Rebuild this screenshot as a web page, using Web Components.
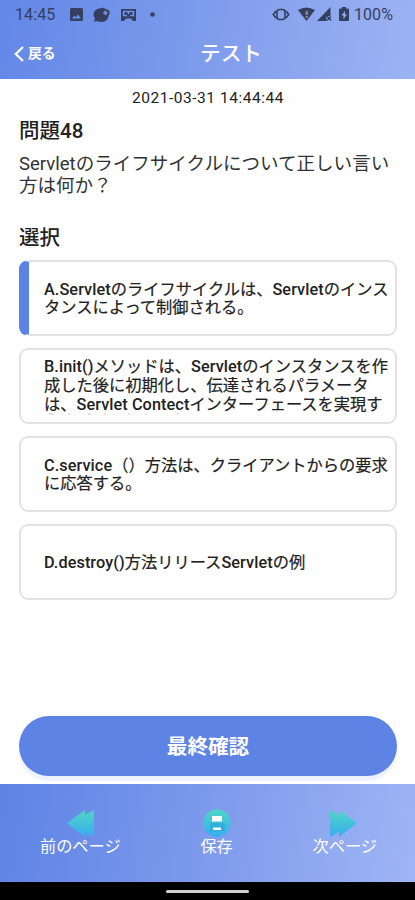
<!DOCTYPE html>
<html lang="ja">
<head>
<meta charset="utf-8">
<meta name="viewport" content="width=device-width">
<title>テスト</title>
<style>
body{margin:0;font-family:Roboto,"Noto Sans CJK JP",sans-serif;color:#222;background:#fefefe}
</style>
</head>
<body>
<quiz-app></quiz-app>
<script>
const define = (name, html) => customElements.define(name, class extends HTMLElement {
  constructor() {
    super();
    const t = document.createElement('template');
    t.innerHTML = html;
    this.attachShadow({mode: 'open'}).append(t.content.cloneNode(true));
  }
});

define('status-bar', `
<style>
:host{display:flex;height:30px;padding:0 22px 0 15px;box-sizing:border-box;align-items:center;color:#343f61;font-size:16px;letter-spacing:.1px}
svg{display:block;fill:currentColor;flex:none}
.sp{flex:1}
span{white-space:nowrap;line-height:30px}
.clock{width:54px}
</style>
<span class="clock">14:45</span>
<svg width="86" height="16" viewBox="0 0 86 16">
  <path fill-rule="evenodd" d="M2.500 1h10q1.500 0 1.500 1.500v10q0 1.500-1.500 1.500h-10Q1 14 1 12.500v-10Q1 1 2.500 1zM3 11.500h9L9 7.500l-2.200 2.700L5.200 8.500z"/>
  <path d="M32 1.300c2-1 3.800-.3 4.700 1 2.500.2 4.300 1.500 4 3.500l-1.500 4c-.3 3-3.200 5.200-6.500 5.200-1.700 0-3-.3-3.800-.8L25 14.500l1-3C22.500 6.500 26 1.500 32 1.300z"/>
  <path d="m33.800 6 2-2.500 3 2-2 3z" fill="#6f8cdd"/>
  <path fill-rule="evenodd" d="M52 2h15v12h-3l-2-2.500h-5L55 14h-3zM53.800 3.800v5.500h11.400V3.800z"/><path d="M55.500 5h3v3h-3zM60.500 5h3v3h-3zM58 7h3v2.500h-3z"/>
  <circle cx="83.500" cy="7.500" r="2.300"/>
</svg>
<span class="sp"></span>
<svg width="80" height="18" viewBox="0 0 80 18">
  <rect x="5" y="3.500" width="8" height="10" rx="2.500" fill="none" stroke="currentColor" stroke-width="1.600"/>
  <path fill="none" stroke="currentColor" stroke-width="1.700" d="M4 5 1.300 8.500 4 12M14 5l2.700 3.500L14 12"/>
  <path d="M26 4q8.500-5 17 0l-8.500 11z"/>
  <path d="M33.500 5h2.500v4h-2.500zm0 5h2.500v2h-2.500z" fill="#85867f"/>
  <path d="M58.500 1v9h-4v5H45z"/><path d="m55 10 4 4.500m0-4-4 4" stroke="currentColor" stroke-width="1.300"/>
  <path fill-rule="evenodd" d="M70 1h4v1.500h2q1 0 1 1V14q0 1-1 1h-8q-1 0-1-1V3.500q0-1 1-1h2zM73 5l-3.500 4.500h2V13L75 8.500h-2z"/>
</svg>
<span style="margin-left:2px">100%</span>`);

define('title-bar', `
<style>
:host{display:grid;grid-template-columns:90px 1fr 43px;height:49px;align-items:center;color:#fff;padding:0 0 2px;box-sizing:border-box}
.back{display:flex;align-items:center;gap:4px;padding:0 0 2px 14px;font-size:13.800px;font-weight:700;line-height:20px}
svg{display:block;margin-top:2px}
h1{margin:0;font-size:20.700px;font-weight:500;line-height:28px;text-align:center}
</style>
<div class="back"><svg width="10" height="18" viewBox="0 0 10 18"><path d="M9 2 1.800 9 9 16" fill="none" stroke="#fff" stroke-width="2.200"/></svg><span><slot name="back"></slot></span></div>
<h1><slot></slot></h1>`);

define('quiz-option', `
<style>
:host{display:flex;height:76px;box-sizing:border-box;border:2px solid #e2e2e2;border-radius:9px;overflow:hidden;align-items:center;font-size:16.250px;line-height:18.700px;position:relative;background:#fff}
:host([selected]){border-left:10px solid #5b83e6}
:host([selected]) .text{padding-left:15px}
.text{padding:2px 0 0 23px;white-space:nowrap;-webkit-text-stroke:.2px currentColor}
:host([overflowing]){align-items:flex-start}
/* Only the first three lines of a long answer fit the card. */
:host([overflowing]) .text{padding-top:8px}
.clip{display:none;position:absolute;left:28px;bottom:7px}
:host([overflowing]) .clip{display:block}
</style>
<div class="text"><slot></slot></div>
<svg class="clip" width="150" height="2"><path d="M0 1h5M19 1h2M39 1h3M55 1h2M79 1h2M96 1h2M128 1h2" stroke="#c4c4c4"/></svg>`);

define('confirm-button', `
<style>
:host{display:block}
button{display:block;width:100%;height:60px;border:0;border-radius:30px;background:#5d83e4;color:#fff;font:700 20.600px/62px Roboto,"Noto Sans CJK JP",sans-serif;padding:0;box-shadow:0 5px 2px #ecf1fc}
</style>
<button><slot></slot></button>`);

define('nav-item', `
<style>
:host{display:flex;flex-direction:column;align-items:center;color:#fff;font-size:16.200px;line-height:20px;white-space:nowrap}
::slotted(svg){display:block;width:28px;height:28px}
</style>
<slot name="icon"></slot><span><slot></slot></span>`);

define('nav-bar', `
<style>
:host{display:flex;justify-content:space-between;height:98px;box-sizing:border-box;padding:25px 38px 0 40px;background:linear-gradient(100deg,#5d83e5 0%,#7d9aec 50%,#9fb5f4 100%)}
</style>
<nav-item><svg slot="icon" viewBox="0 0 28 28"><defs><linearGradient id="g" x2="0" y2="1"><stop stop-color="#50d5c5"/><stop offset="1" stop-color="#38acf1"/></linearGradient></defs><path fill="url(#g)" d="M1 14 19 1v5L28 1v27l-9-5v5z"/></svg>前のページ</nav-item>
<nav-item><svg slot="icon" viewBox="0 0 28 28"><defs><linearGradient id="g" x2="0" y2="1"><stop stop-color="#50d5c5"/><stop offset="1" stop-color="#32abef"/></linearGradient></defs><circle cx="14" cy="14" r="13.700" fill="url(#g)"/><path d="M7 14h13q2 0 2 2v4q0 2-2 2H7z" fill="#26a7d9" opacity=".6"/><path d="M9 7h10v5.500H9zM10 18.500h8V21h-8z" fill="#fff"/></svg>保存</nav-item>
<nav-item><svg slot="icon" viewBox="0 0 28 28" style="margin-right:3px"><defs><linearGradient id="g" x2="0" y2="1"><stop stop-color="#50d5c5"/><stop offset="1" stop-color="#38acf1"/></linearGradient></defs><path fill="url(#g)" d="M28 14 10 1v5L1 1v27l9-5v5z"/></svg>次ページ</nav-item>`);

define('home-indicator', `
<style>
:host{display:grid;place-items:center;height:18px;background:#000}
i{width:83px;height:3px;border-radius:2px;background:#d0d0d0}
</style><i></i>`);

define('quiz-app', `
<style>
:host{display:flex;flex-direction:column;height:900px;width:415px;overflow:hidden}
header{background:linear-gradient(100deg,#6287e7 0%,#7f9cec 50%,#9db4f3 100%);height:79px;flex:none}
main{flex:1;display:flex;flex-direction:column;padding:0 18px 8px 19px}
time{font-size:15.500px;letter-spacing:.53px;line-height:20px;text-align:center;padding-top:9px;white-space:nowrap}
h2{margin:0;font-size:20.500px;line-height:26px;font-weight:500;white-space:nowrap}
.number{padding-top:10px}
p{margin:10px 0 0;font-size:18.550px;line-height:21.700px;white-space:nowrap;color:#333}
.choose{padding-top:28px}
.options{display:flex;flex-direction:column;gap:12px;padding-top:9px}
b{font-weight:500;letter-spacing:.08px;-webkit-text-stroke:0}
confirm-button{margin-top:auto}
</style>
<header><status-bar></status-bar><title-bar><span slot="back">戻る</span>テスト</title-bar></header>
<main>
<time>2021-03-31 14:44:44</time>
<h2 class="number">問題48</h2>
<p>Servletのライフサイクルについて正しい言い<br>方は何か？</p>
<h2 class="choose">選択</h2>
<div class="options">
<quiz-option selected><b>A.Servlet</b>のライフサイクルは、<b>Servlet</b>のインス<br>タンスによって制御される。</quiz-option>
<quiz-option overflowing><b>B.init()</b>メソッドは、<b>Servlet</b>のインスタンスを作<br>成した後に初期化し、伝達されるパラメータ<br>は、<b>Servlet Contect</b>インターフェースを実現す</quiz-option>
<quiz-option><b>C.service</b>（）方法は、クライアントからの要求<br>に応答する。</quiz-option>
<quiz-option><b>D.destroy()</b>方法リリース<b>Servlet</b>の例</quiz-option>
</div>
<confirm-button>最終確認</confirm-button>
</main>
<nav-bar></nav-bar>
<home-indicator></home-indicator>`);
</script>
</body>
</html>
